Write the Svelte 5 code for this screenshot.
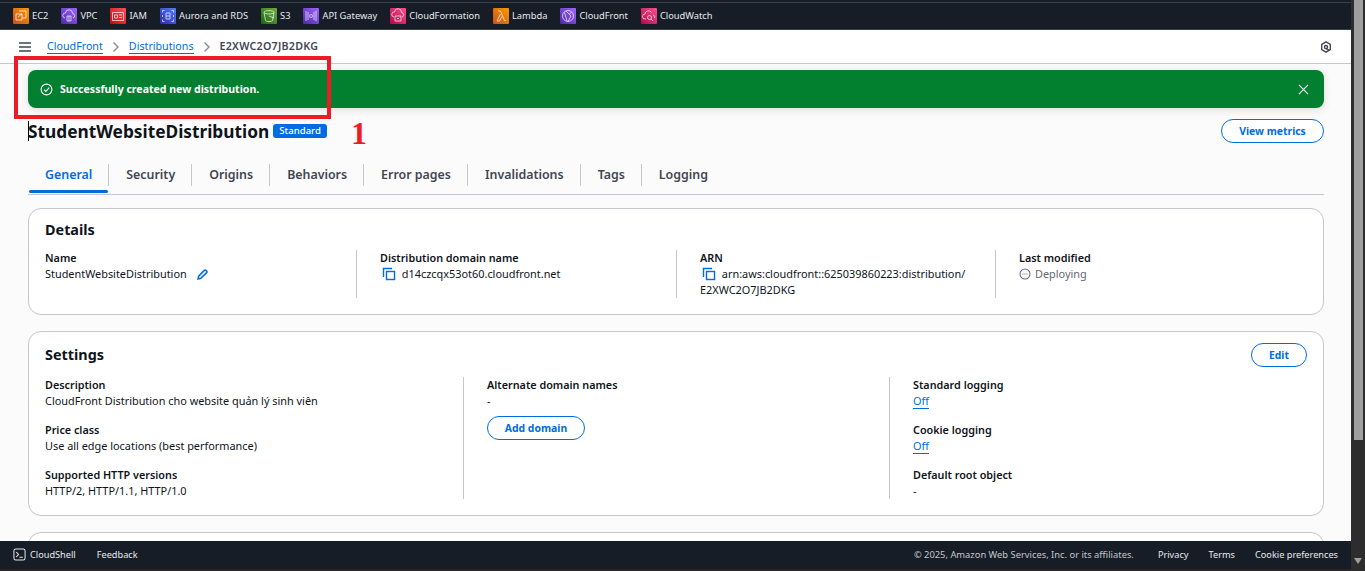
<script>
  const services = [
    { name: 'EC2', tone: 'orange', d: 'M3 6h6v6H3zM6 3h7v7h-4M5 9l4-3' },
    { name: 'VPC', tone: 'purple', d: 'M4 10a2.5 2.5 0 0 1 .5-5 3.5 3.5 0 0 1 7 .5 2.3 2.3 0 0 1 .5 4.500M6 8h4v5H6zM8 8v5' },
    { name: 'IAM', tone: 'red', d: 'M2.500 4.500h11v8h-11zM4.500 7h3v3h-3zM9 7h3M9 9.500h3' },
    { name: 'Aurora and RDS', tone: 'blue', d: 'M6 5h4v6H6zM6 8h4M2.500 2.500h2M2.500 2.500v2M13.500 2.500h-2M13.500 2.500v2M2.500 13.500h2M2.500 13.500v-2M13.500 13.500h-2M13.500 13.500v-2M2.500 7v2M13.500 7v2' },
    { name: 'S3', tone: 'green', d: 'M3 4.500c0-2.500 10-2.500 10 0l-1.500 8c-.5 1.500-6.500 1.500-7 0zM3 4.500c1 2 9 2 10 0M8 8l5 2' },
    { name: 'API Gateway', tone: 'purple', d: 'M3 3v10M5 4v8M11 4v8M13 3v10M7.500 6 6.500 8l1 2M8.500 6l1 2-1 2' },
    { name: 'CloudFormation', tone: 'pink', d: 'M4 9a2.500 2.500 0 0 1 .5-5 3.500 3.500 0 0 1 7 .5 2.300 2.300 0 0 1 .5 4.500M5 8h6v5H5zM7 10.500h2' },
    { name: 'Lambda', tone: 'orange', d: 'M5 3h2.500l4 9.500H13M7.500 6 4 13h2.500l2.500-4.500' },
    { name: 'CloudFront', tone: 'purple', d: 'M8 2.500a5.500 5.500 0 1 0 0 11 5.500 5.500 0 0 0 0-11zM4.500 4.500 7 13M6 3l5 5-3 5.500M11.500 4 9.500 6' },
    { name: 'CloudWatch', tone: 'pink', d: 'M5 11H4a2.500 2.500 0 0 1 0-5 3.500 3.500 0 0 1 6.500-1.500M12 7a2 2 0 0 1 1.500 3M8.500 7.500a2 2 0 1 0 0 4 2 2 0 0 0 0-4zM10 11l2 2' }
  ];
  const tabs = ['General', 'Security', 'Origins', 'Behaviors', 'Error pages', 'Invalidations', 'Tags', 'Logging'];
</script>

<div class="window">
  <div class="page">
    <nav class="services">
      {#each services as s}
        <span class="service">
          <span class="tile {s.tone}">
            <svg viewBox="0 0 16 16" width="16" height="16" fill="none" stroke="#fff" stroke-opacity="0.85" stroke-width="0.8"><path d={s.d} /></svg>
          </span>
          <span class="name">{s.name}</span>
        </span>
      {/each}
    </nav>

    <div class="crumbs">
      <svg class="burger" viewBox="0 0 12 10" width="12" height="10"><path d="M0 1h12M0 5h12M0 9h12" stroke="#424650" stroke-width="1.500" /></svg>
      <span class="crumb">CloudFront</span>
      <svg class="chev" viewBox="0 0 8 12" width="8" height="12" fill="none"><path d="M1.500 1.500 6 6l-4.500 4.500" stroke="#8c8c94" stroke-width="1.400" /></svg>
      <span class="crumb">Distributions</span>
      <svg class="chev" viewBox="0 0 8 12" width="8" height="12" fill="none"><path d="M1.500 1.500 6 6l-4.500 4.500" stroke="#8c8c94" stroke-width="1.400" /></svg>
      <span class="current">E2XWC2O7JB2DKG</span>
      <svg class="hex" viewBox="0 0 14 14" width="12" height="12" fill="none" stroke="#424650" stroke-width="1.600">
        <path d="M7 1l5 3v6l-5 3-5-3V4z" />
        <circle cx="7" cy="7" r="1.800" />
        <path d="M7 9l4 2" />
      </svg>
    </div>

    <main>
      <div class="flash">
        <svg viewBox="0 0 14 14" width="13" height="13" fill="none" stroke="#fff" stroke-width="1.200"><circle cx="7" cy="7" r="5.800" /><path d="M4.300 7.200 6.300 9.200 9.900 5" /></svg>
        <span>Successfully created new distribution.</span>
        <svg class="close" viewBox="0 0 12 12" width="11" height="11" fill="none" stroke="#fff" stroke-width="1.300" stroke-opacity="0.9"><path d="M1 1l10 10M11 1 1 11" /></svg>
      </div>

      <header class="title">
        <h1>StudentWebsiteDistribution</h1>
        <span class="badge">Standard</span>
        <button class="btn metrics">View metrics</button>
      </header>

      <div class="tabs">
        {#each tabs as t, i}
          <span class="tab" class:active={i === 0}>{t}</span>
        {/each}
      </div>

      <section class="card details">
        <h2>Details</h2>
        <div class="grid-details">
          <div class="col">
            <div class="label">Name</div>
            <div class="value with-icon">StudentWebsiteDistribution
              <svg class="pencil" viewBox="0 0 12 12" width="11" height="11" fill="none" stroke="#006ce0" stroke-width="1.700"><path d="M1.200 10.800l.6-3L8 1.500a1.200 1.200 0 0 1 1.700 0l.8.8a1.200 1.200 0 0 1 0 1.700L4.200 10.200z" /></svg>
            </div>
          </div>
          <div class="col">
            <div class="label">Distribution domain name</div>
            <div class="value copy">
              <svg class="copy-icon" viewBox="0 0 14 14" width="14" height="14" fill="none" stroke="#006ce0" stroke-width="1.400"><path d="M1.500 10V1.500H10" /><rect x="4.500" y="4.500" width="8" height="8" /></svg>
              d14czcqx53ot60.cloudfront.net
            </div>
          </div>
          <div class="col">
            <div class="label">ARN</div>
            <div class="value copy">
              <svg class="copy-icon" viewBox="0 0 14 14" width="14" height="14" fill="none" stroke="#006ce0" stroke-width="1.400"><path d="M1.500 10V1.500H10" /><rect x="4.500" y="4.500" width="8" height="8" /></svg>
              arn:aws:cloudfront::625039860223:distribution/
            </div>
            <div class="value">E2XWC2O7JB2DKG</div>
          </div>
          <div class="col">
            <div class="label">Last modified</div>
            <div class="value status">
              <svg viewBox="0 0 14 14" width="12" height="12" fill="none" stroke="#5f6b7a" stroke-width="1.200"><circle cx="7" cy="7" r="5.800" /><path d="M4 7h1.200M6.400 7h1.200M8.800 7H10" stroke-width="1.300" /></svg>
              Deploying
            </div>
          </div>
        </div>
      </section>

      <section class="card settings">
        <div class="settings-head">
          <h2>Settings</h2>
          <button class="btn edit">Edit</button>
        </div>
        <div class="grid-settings">
          <div class="col">
            <div class="pair"><div class="label">Description</div><div class="value">CloudFront Distribution cho website quản lý sinh viên</div></div>
            <div class="pair"><div class="label">Price class</div><div class="value">Use all edge locations (best performance)</div></div>
            <div class="pair"><div class="label">Supported HTTP versions</div><div class="value">HTTP/2, HTTP/1.1, HTTP/1.0</div></div>
          </div>
          <div class="col">
            <div class="label">Alternate domain names</div>
            <div class="value">-</div>
            <button class="btn add">Add domain</button>
          </div>
          <div class="col">
            <div class="pair"><div class="label">Standard logging</div><div class="value"><span class="off">Off</span></div></div>
            <div class="pair"><div class="label">Cookie logging</div><div class="value"><span class="off">Off</span></div></div>
            <div class="pair"><div class="label">Default root object</div><div class="value">-</div></div>
          </div>
        </div>
      </section>

      <section class="card stub"></section>
    </main>

    <footer>
      <svg viewBox="0 0 14 14" width="13" height="13" fill="none" stroke="#e4e6ea" stroke-width="1.100"><rect x="1" y="1" width="12" height="12" rx="2" /><path d="M3.500 4.500 6 7 3.500 9.500M7 10h3.500" /></svg>
      <span class="shell">CloudShell</span>
      <span class="feedback">Feedback</span>
      <span class="copyright">© 2025, Amazon Web Services, Inc. or its affiliates.</span>
      <span class="flink privacy">Privacy</span>
      <span class="flink">Terms</span>
      <span class="flink">Cookie preferences</span>
    </footer>
    <div class="bottom-line"></div>
  </div>

  <div class="scrollbar">
    <div class="thumb"></div>
    <div class="arrow"></div>
  </div>

  <div class="annotation"></div>
  <div class="mark">1</div>
  <div class="caret"></div>
</div>

<style>
  :global(body) {
    margin: 0;
    font-family: "Noto Sans", "Open Sans", sans-serif;
    font-size: 11px;
    color: #0f141a;
  }

  .window {
    position: relative;
    display: flex;
    width: 1365px;
    height: 571px;
    overflow: hidden;
    background: #fff;
  }

  .page {
    flex: 1;
    min-width: 0;
    display: flex;
    flex-direction: column;
  }

  .services {
    box-sizing: border-box;
    height: 30px;
    flex: none;
    display: flex;
    align-items: center;
    gap: 13px;
    padding: 3px 0 0 13px;
    background: #161d26;
    border-bottom: 1px solid #3a3f48;
    box-shadow: inset 0 2px 0 #161d26, inset 0 3px 0 #3a3f48;
    color: #e6e9ee;
    font-size: 9.3px;
  }

  .service {
    display: flex;
    align-items: center;
    gap: 3px;
  }

  .name {
    margin-bottom: 2px;
  }

  .tile {
    display: block;
    width: 16px;
    height: 16px;
    border-radius: 1px;
  }

  .tile svg {
    display: block;
  }

  .orange { background: linear-gradient(45deg, #c8511b, #ff9900); }
  .purple { background: linear-gradient(45deg, #4d27a8, #a166ff); }
  .red { background: linear-gradient(45deg, #bd0816, #ff5252); }
  .blue { background: linear-gradient(45deg, #2e27ad, #527fff); }
  .green { background: linear-gradient(45deg, #1b660f, #6cae3e); }
  .pink { background: linear-gradient(45deg, #b0084d, #ff4f8b); }

  .crumbs {
    box-sizing: border-box;
    height: 34px;
    flex: none;
    display: flex;
    align-items: center;
    padding-left: 19px;
    background: #fff;
    border-bottom: 1px solid #c6c6cd;
    font-size: 10.7px;
    line-height: 14px;
  }

  .burger {
    margin-right: 16px;
  }

  .crumb {
    color: #006ce0;
    border-bottom: 1px solid #006ce0;
    line-height: 14px;
  }

  .chev {
    margin: 0 9px;
  }

  .current {
    color: #424650;
    font-weight: 600;
    letter-spacing: 0.25px;
    padding-bottom: 1px;
  }

  .hex {
    margin-left: auto;
    margin-right: 19px;
  }

  main {
    flex: 1;
    min-height: 0;
    overflow: hidden;
    padding: 6px 27px 0 28px;
    background: #fbfbfb;
  }

  .flash {
    display: flex;
    align-items: center;
    gap: 7px;
    height: 38px;
    padding: 0 15px 0 12px;
    border-radius: 8px;
    background: #037f30;
    color: #fff;
    font-weight: 700;
    font-size: 10.56px;
    box-shadow: 0 2px 8px rgba(0, 7, 22, 0.12);
  }

  .close {
    margin-left: auto;
  }

  .title {
    display: flex;
    align-items: center;
    gap: 4px;
    height: 24px;
    margin-top: 11px;
  }

  h1 {
    margin: 0;
    padding-top: 2px;
    font-size: 17.3px;
    font-weight: 700;
    line-height: 24px;
  }

  .badge {
    padding: 0 6px;
    height: 14px;
    line-height: 14px;
    border-radius: 3px;
    background: #006ce0;
    color: #fff;
    font-size: 9.6px;
    font-weight: 500;
  }

  .btn {
    box-sizing: border-box;
    height: 24px;
    padding: 0;
    border: 1px solid #006ce0;
    border-radius: 12px;
    background: #fff;
    color: #006ce0;
    font: 700 10.4px "Noto Sans", sans-serif;
  }

  .metrics {
    margin-left: auto;
    width: 103px;
  }

  .tabs {
    box-sizing: border-box;
    display: flex;
    align-items: flex-start;
    height: 45px;
    margin-top: 7px;
    padding-top: 14px;
    border-bottom: 1px solid #c6c6cd;
  }

  .tab {
    position: relative;
    box-sizing: border-box;
    height: 22px;
    padding: 4px 16px 0 17px;
    line-height: 14px;
    color: #424650;
    font-size: 12.4px;
    font-weight: 600;
    border-right: 1px solid #c6c6cd;
  }

  .tab:last-child {
    border-right: none;
  }

  .active {
    color: #006ce0;
  }

  .active::after {
    content: '';
    position: absolute;
    left: 1px;
    right: 0;
    bottom: -7px;
    height: 3px;
    border-radius: 2px;
    background: #006ce0;
  }

  .card {
    box-sizing: border-box;
    padding: 0 16px;
    background: #fff;
    border: 1px solid #c6c6cd;
    border-radius: 13px;
    margin-bottom: 16px;
  }

  .details {
    margin-top: 13px;
    height: 107px;
    padding-top: 11px;
  }

  h2 {
    margin: 0;
    font-size: 14.4px;
    font-weight: 700;
    line-height: 20px;
  }

  .label {
    font-weight: 600;
    line-height: 16px;
    font-size: 10.8px;
  }

  .value {
    line-height: 16px;
    font-size: 10.9px;
    color: #0f141a;
  }

  .grid-details {
    display: grid;
    grid-template-columns: 311px 320px 319px 1fr;
    margin-top: 10px;
  }

  .col + .col {
    box-sizing: border-box;
    padding-left: 23px;
    border-left: 1px solid #c6c6cd;
  }

  .grid-details .col {
    height: 48px;
  }

  .with-icon {
    display: flex;
    align-items: center;
    gap: 10px;
  }

  .copy-icon {
    vertical-align: -3px;
    margin: 0 3px 0 2px;
  }

  .status {
    display: flex;
    align-items: center;
    gap: 4px;
    color: #656871;
  }

  .settings {
    height: 185px;
    padding-top: 11px;
  }

  .settings-head {
    display: flex;
    justify-content: space-between;
    align-items: center;
    height: 24px;
  }

  .edit {
    width: 56px;
  }

  .grid-settings {
    display: grid;
    grid-template-columns: 418px 426px 1fr;
    margin-top: 10px;
  }

  .grid-settings .col {
    height: 122px;
  }

  .pair {
    margin-bottom: 13px;
  }

  .off {
    color: #006ce0;
    border-bottom: 1px solid #006ce0;
  }

  .add {
    display: block;
    width: 98px;
    margin-top: 7px;
  }

  .stub {
    height: 40px;
  }

  footer {
    box-sizing: border-box;
    flex: none;
    height: 28px;
    display: flex;
    align-items: center;
    padding: 0 13px 1px;
    background: #161d26;
    color: #e6e9ee;
    font-size: 9.2px;
  }

  .shell {
    margin-left: 4px;
  }

  .feedback {
    margin-left: 21px;
  }

  .copyright {
    margin-left: auto;
    color: #c6c6cd;
    font-size: 9.35px;
  }

  .flink {
    margin-left: 20px;
  }

  .privacy {
    margin-left: 24px;
  }

  .bottom-line {
    flex: none;
    height: 2px;
    background: #2a2622;
  }

  .scrollbar {
    position: relative;
    flex: none;
    width: 14px;
    background: #2d2d2d;
  }

  .thumb {
    width: 9px;
    height: 440px;
    margin-left: 3px;
    background: #9f9f9f;
  }

  .arrow {
    position: absolute;
    left: 3px;
    top: 558px;
    border-left: 4.500px solid transparent;
    border-right: 4.500px solid transparent;
    border-top: 6px solid #9f9f9f;
  }

  .annotation {
    position: absolute;
    left: 14px;
    top: 56px;
    box-sizing: border-box;
    width: 317px;
    height: 63px;
    border: 4px solid #ed1c24;
  }

  .mark {
    position: absolute;
    left: 351px;
    top: 115px;
    color: #ed1c24;
    font: 700 32px "Liberation Serif", serif;
  }

  .caret {
    position: absolute;
    left: 28px;
    top: 121px;
    width: 1px;
    height: 20px;
    background: #000;
  }
</style>
